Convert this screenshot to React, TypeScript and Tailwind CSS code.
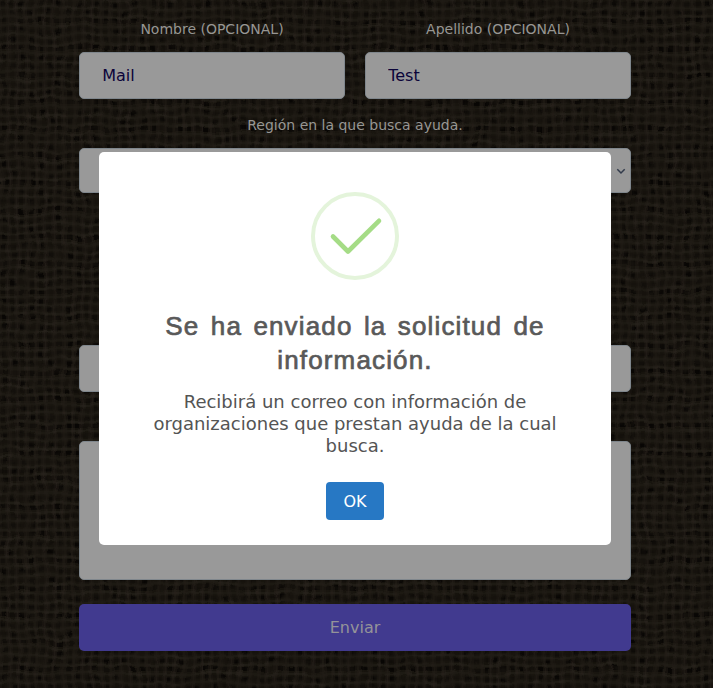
const FIELD =
  'block w-full rounded-[5px] border border-[#7f868c] bg-[#999999] text-[16px] text-[#0b0439]';
const LABEL = 'text-center text-[14px] leading-[21px] text-[#979693]';

// Woven burlap drawn behind the form
function Burlap() {
  return (
    <svg className="absolute inset-0 h-full w-full" width="713" height="688" aria-hidden="true">
      <defs>
        <pattern id="holes" width="37" height="27" patternUnits="userSpaceOnUse">
          <path d="M0 3.5H37M0 12.5H37M0 21H37" stroke="#050301" strokeWidth="4" strokeOpacity="0.35" />
          <path d="M4 0V27M13 0V27M22 0V27M32 0V27" stroke="#050301" strokeWidth="4" strokeOpacity="0.3" />
          <path d="M2 3.5H6M20 3.5H24.500M11 12.500H15.500M30 12.500H34M2 21H6M19 21H24M30 21H34.500" stroke="#030201" strokeWidth="4" strokeOpacity="0.6" />
          <path d="M0 8H37M0 17H37M0 26H37" stroke="#29241e" strokeWidth="1.3" strokeOpacity="0.6" />
          <path d="M8.500 0V27M17.500 0V27M27 0V27M36 0V27" stroke="#29241e" strokeWidth="1.3" strokeOpacity="0.5" />
        </pattern>
        <filter id="warp" x="0" y="0" width="100%" height="100%" colorInterpolationFilters="sRGB">
          <feTurbulence type="fractalNoise" baseFrequency="0.03" numOctaves="4" seed="8" />
          <feDisplacementMap in="SourceGraphic" scale="9" xChannelSelector="R" yChannelSelector="G" />
          <feGaussianBlur stdDeviation="0.65" />
        </filter>
        <filter id="patches" x="0" y="0" width="100%" height="100%" colorInterpolationFilters="sRGB">
          <feTurbulence type="fractalNoise" baseFrequency="0.06 0.09" numOctaves="3" seed="3" />
          <feColorMatrix values="0 0 0 0 0.105  0 0 0 0 0.09  0 0 0 0 0.066  4 0 0 0 -1.4" />
        </filter>
        <filter id="columns" x="0" y="0" width="100%" height="100%" colorInterpolationFilters="sRGB">
          <feTurbulence type="fractalNoise" baseFrequency="0.2 0.03" numOctaves="3" seed="12" />
          <feColorMatrix values="0 0 0 0 0.16  0 0 0 0 0.14  0 0 0 0 0.115  3 0 0 0 -1.3" />
        </filter>
      </defs>
      <rect width="713" height="688" fill="#1e1a14" />
      <rect x="-20" y="-20" width="753" height="728" fill="url(#holes)" filter="url(#warp)" />
      <rect width="713" height="688" filter="url(#columns)" opacity="0.2" />
      <rect width="713" height="688" filter="url(#patches)" opacity="0.55" />
    </svg>
  );
}

export default function App() {
  return (
    <div className="relative h-[688px] w-[713px] overflow-hidden bg-[#1a1611] font-['DejaVu_Sans',sans-serif]">
      <Burlap />
      <form className="relative ml-[79px] w-[552px] pt-[19px]">
        <div className="grid grid-cols-2 gap-5">
          <div>
            <div className={LABEL}>Nombre (OPCIONAL)</div>
            <input className={`${FIELD} mt-3 h-[47px] px-[22.2px]`} defaultValue="Mail" />
          </div>
          <div>
            <div className={LABEL}>Apellido (OPCIONAL)</div>
            <input className={`${FIELD} mt-3 h-[47px] px-[22.2px]`} defaultValue="Test" />
          </div>
        </div>
        <div className={`${LABEL} mt-4`}>Región en la que busca ayuda.</div>
        <div className={`${FIELD} mt-3 flex h-[45px] items-center justify-end pr-1`}>
          <svg width="10" height="10" viewBox="0 0 10 10" fill="none" stroke="#323b4b" strokeWidth="1.5">
            <path d="M1.3 3.2 5 7 8.7 3.2" />
          </svg>
        </div>
        <input className={`${FIELD} mt-[152px] h-[47px]`} />
        <textarea className={`${FIELD} mt-[49px] h-[139px] resize-none`} />
        <button type="button" className="mt-6 block h-[47px] w-full rounded-[5px] bg-[#413a8f] text-[16px] text-[#949399]">
          Enviar
        </button>
      </form>

      <div
        role="dialog"
        className="absolute top-[152px] left-[99px] flex h-[393px] w-[512px] flex-col items-center rounded-[5px] bg-white pt-10 text-center"
      >
        <svg width="88" height="88" viewBox="0 0 88 88" fill="none">
          <circle cx="44" cy="44" r="42" stroke="#e4f4db" strokeWidth="4" />
          <path d="M22 44.5 37 59.5 68 28.8" stroke="#a5dc86" strokeWidth="4.6" strokeLinecap="round" strokeLinejoin="round" />
        </svg>
        <h2 className="mt-[29px] w-[430px] font-['Liberation_Sans',Arial,sans-serif] text-[26px] leading-[34px] tracking-[1.15px] text-[#595959] [-webkit-text-stroke:0.7px_#595959] [word-spacing:3px]">
          Se ha enviado la solicitud de información.
        </h2>
        <p className="mt-[14px] w-[440px] text-[18px] leading-[22px] text-[#545454]">
          Recibirá un correo con información de organizaciones que prestan ayuda de la cual busca.
        </p>
        <button type="button" className="mt-[25px] h-[38px] w-[58px] rounded-[4px] bg-[#2778c4] pt-px text-[16px] text-white">
          OK
        </button>
      </div>
    </div>
  );
}
